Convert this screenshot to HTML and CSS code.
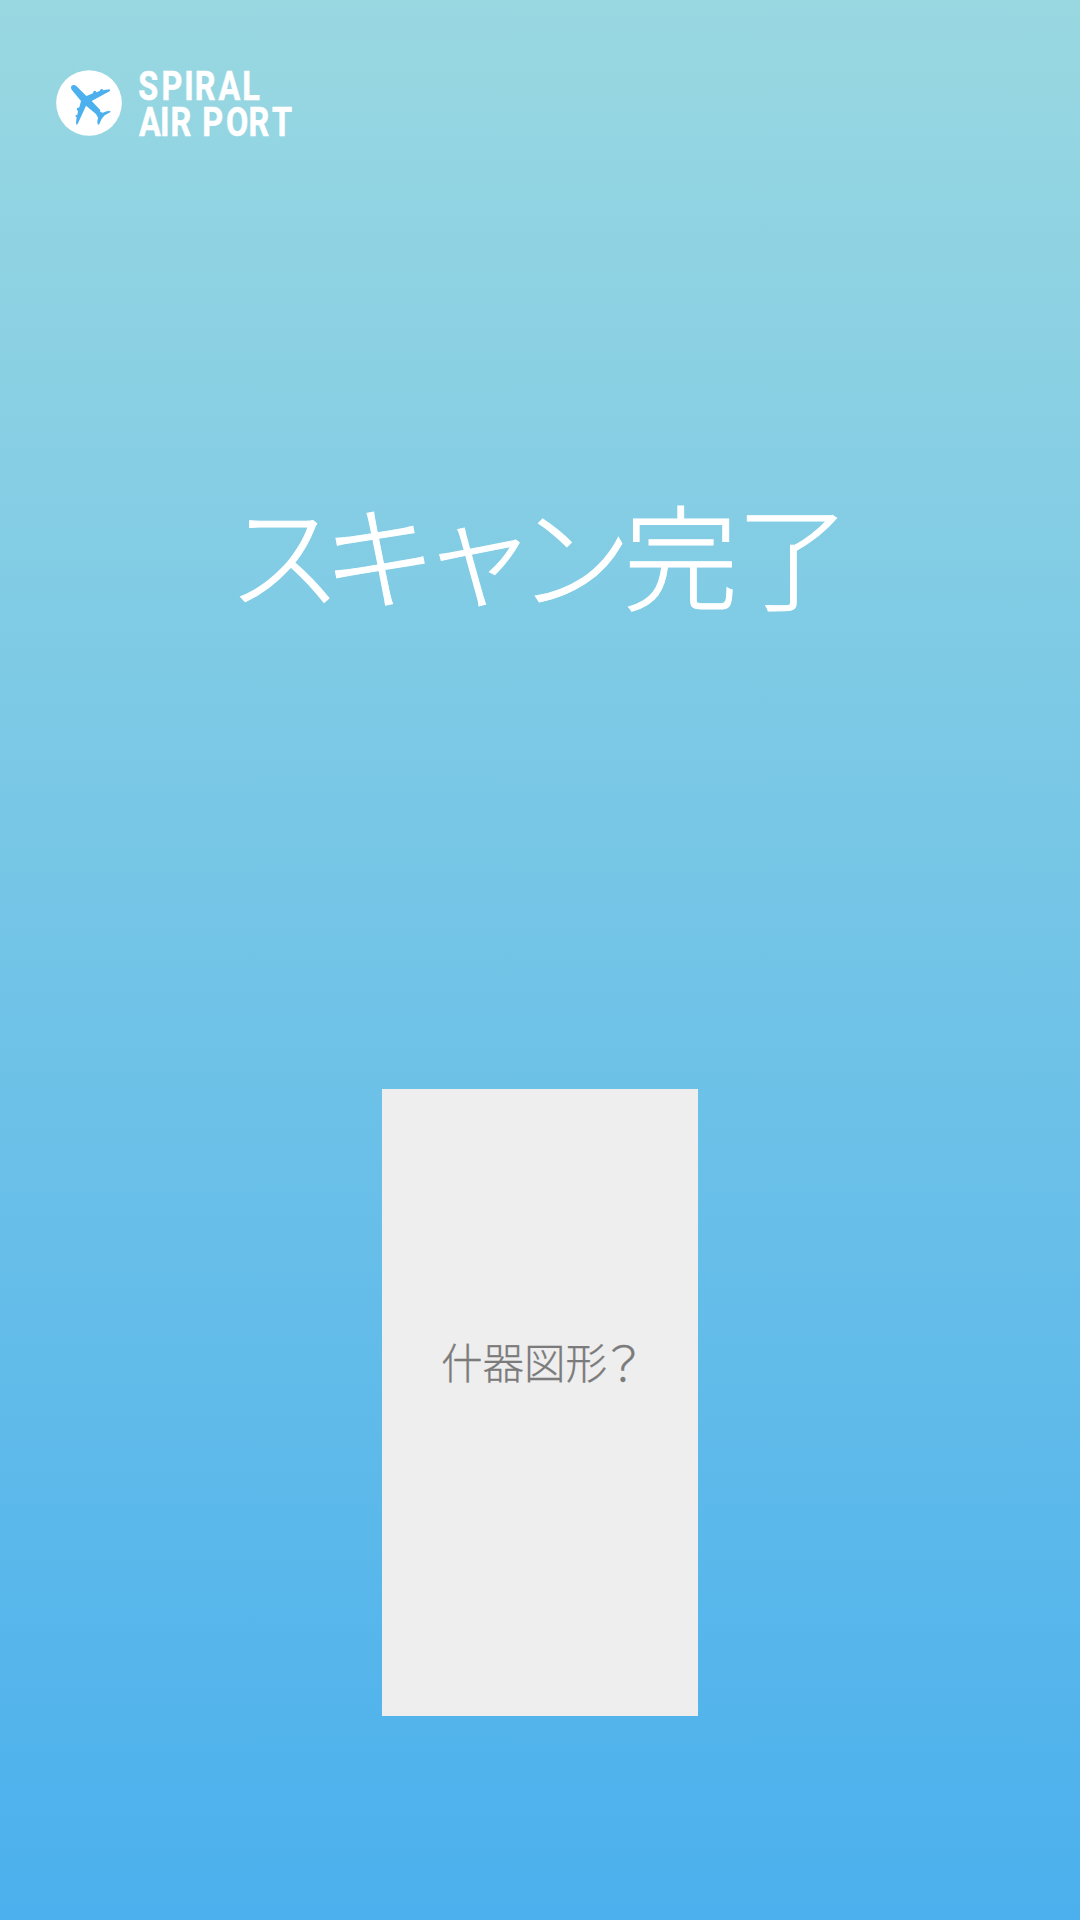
FILE: index.html
```html
<!DOCTYPE html>
<html lang="ja">
<head>
<meta charset="utf-8">
<title>SPIRAL AIR PORT</title>
<link rel="stylesheet" href="styles.css">
</head>
<body>
<main class="screen">
  <header class="brand">
    <svg class="brand-mark" viewBox="18 16 198 198" aria-hidden="true">
      <circle cx="117" cy="115" r="98.5" fill="#fff"/>
      <path fill="#4bb0ed" d="M65 75C61 68 63 63 69 61Q75 60 79 64L109 94L129 86Q129 79 134 78Q139 78 139 83L149 79Q150 74 154 73Q159 73 159 77L177 74Q181 75 180 79L125 109L150 135L151 142L159 144Q168 138 180 139L182 142L164 152Q153 162 148 178L144 181Q140 171 144 159L138 148L108 123L83 178L79 180Q77 176 80 158Q75 157 77 152L82 150L84 139Q79 137 81 131L88 128L93 109Z"/>
    </svg>
    <svg class="brand-name" viewBox="0 0 156 72">
      <g transform="scale(.78 1)">
        <text x="-1 29 58 71.5 102 132.5" y="32.7">SPIRAL</text>
        <text x="0 27 40.5 70 81 111.5 140.5 170.5" y="68.7">AIR PORT</text>
      </g>
    </svg>
  </header>
  <h1 class="status"><span class="su">ス</span><span class="ki">キ</span><span class="ya">ャ</span><span class="n">ン</span><span class="kan">完</span><span>了</span></h1>
  <section class="fixture"><p class="fixture-label">什器図形<span class="question">？</span></p></section>
</main>
</body>
</html>
```
FILE: styles.css
```css
* { box-sizing: border-box; margin: 0; }
body { font-family: "Noto Sans CJK JP", sans-serif; }
.screen {
  width: 1080px;
  height: 1920px;
  display: flex;
  flex-direction: column;
  align-items: center;
  background: linear-gradient(#99d8e1, #4bb0ed);
  overflow: hidden;
}
.brand {
  align-self: flex-start;
  display: flex;
  align-items: center;
  gap: 17px;
  height: 72px;
  margin: 67px 0 0 56px;
}
.brand-mark { width: 66px; height: 66px; }
.brand-name {
  width: 156px;
  height: 72px;
  overflow: visible;
  fill: #fff;
  stroke: #fff;
  stroke-width: .6px;
  font: 700 41.5px Roboto, sans-serif;
}
.status {
  margin-top: 333px;
  height: 160px;
  padding-left: 4px;
  line-height: 160px;
  font-size: 114.5px;
  font-weight: 300;
  font-feature-settings: "palt";
  -webkit-text-stroke: 1px #fff;
  white-space: nowrap;
  color: #fff;
}
.status span { display: inline-block; }
.status .su { margin-right: -10px; transform: translateY(-2px); }
.status .ki { margin-right: -2px; transform: translateY(-1px); }
.status .ya { margin-right: -1px; transform: translateY(-6px); }
.status .n { margin-right: -2px; transform: translateY(-1px); }
.status .kan { margin-right: -2px; }
.fixture {
  width: 316px;
  height: 627.7px;
  margin-top: 456.7px;
  padding: 0 0 84px 8px;
  display: flex;
  align-items: center;
  justify-content: center;
  background: #eee;
}
.fixture-label {
  font-size: 41.5px;
  font-weight: 300;
  line-height: 60px;
  -webkit-text-stroke: .3px #7b7b7b;
  color: #7b7b7b;
  white-space: nowrap;
}
.question {
  display: inline-block;
  font-size: 47px;
  line-height: 1;
  margin-left: -7px;
  transform: translateY(2px);
}
```
